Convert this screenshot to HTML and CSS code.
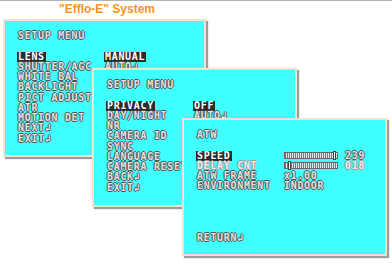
FILE: index.html
```html
<!DOCTYPE html>
<html lang="en">
<head>
    <meta charset="UTF-8">
    <title>Efflo-E System</title>
    <link rel="stylesheet" href="styles.css">
</head>
<body>
    <div class="screen">
        <h1 class="title">"Efflo-E" System</h1>

        <!-- Menu 1 -->
        <div class="osd win-1">
            <div class="head">SETUP MENU</div>
            <div class="menu">
                <span class="sel">LENS</span><span class="sel">MANUAL</span>
                <span>SHUTTER/AGC</span><span>AUTO↲</span>
                <span>WHITE BAL</span><span></span>
                <span>BACKLIGHT</span><span></span>
                <span>PICT ADJUST</span><span></span>
                <span>ATR</span><span></span>
                <span>MOTION DET</span><span></span>
                <span>NEXT↲</span><span></span>
                <span>EXIT↲</span><span></span>
            </div>
        </div>

        <!-- Menu 2 -->
        <div class="osd win-2">
            <div class="head">SETUP MENU</div>
            <div class="menu">
                <span class="sel">PRIVACY</span><span class="sel">OFF</span>
                <span>DAY/NIGHT</span><span>AUTO↲</span>
                <span>NR</span><span></span>
                <span>CAMERA ID</span><span></span>
                <span>SYNC</span><span></span>
                <span>LANGUAGE</span><span></span>
                <span>CAMERA RESET</span><span></span>
                <span>BACK↲</span><span></span>
                <span>EXIT↲</span><span></span>
            </div>
        </div>

        <!-- ATW -->
        <div class="osd win-3">
            <div class="head">ATW</div>
            <div class="menu">
                <span class="sel">SPEED</span>
                <span class="value"><i class="bar"><b class="knob" style="left: 48px"></b></i>239</span>
                <span class="dim">DELAY CNT</span>
                <span class="value dim"><i class="bar"><b class="knob" style="left: 3px"></b></i>018</span>
                <span>ATW FRAME</span><span>x1.00</span>
                <span>ENVIRONMENT</span><span>INDOOR</span>
            </div>
            <div class="foot">RETURN↲</div>
        </div>
    </div>
</body>
</html>
```

FILE: styles.css
```css
* {
    margin: 0;
    padding: 0;
    box-sizing: border-box;
}

body {
    background: #ffffff;
    width: 392px;
    height: 270px;
    overflow: hidden;
}

.screen {
    position: relative;
    width: 392px;
    height: 270px;
    border-top: 1px solid #b4b4b4;
}

.title {
    font-family: 'Liberation Sans', Arial, sans-serif;
    font-size: 12px;
    font-weight: bold;
    color: #f7941d;
    width: 214px;
    text-align: center;
    line-height: 14px;
    padding-top: 1px;
}

.osd {
    position: absolute;
    background: #3fffff;
    border: 2px solid #ece4cf;
    box-shadow: 2px 2px 1px #9c9c9c;
    padding: 10px 13px 0;
    font-family: 'DejaVu Sans Mono', 'Liberation Mono', monospace;
    font-size: 10px;
    font-weight: bold;
    letter-spacing: 0.68px;
    line-height: 10.25px;
    color: #e2e2e2;
    text-shadow: 1px 0 0 #555, -1px 0 0 #555, 0 1px 0 #555, 0 -1px 0 #555;
    white-space: nowrap;
    overflow: hidden;
}

.win-1 { left: 3px; top: 18px; width: 203px; height: 138px; }
.win-2 { left: 92px; top: 67px; width: 205px; height: 139px; }
.win-3 { left: 182px; top: 117px; width: 205px; height: 138px; }

.head {
    height: 10.25px;
    margin-bottom: 10.25px;
}

.menu {
    display: grid;
    grid-template-columns: 87px auto;
    grid-auto-rows: 10.25px;
}

.menu span {
    justify-self: start;
}

.sel {
    background: #2b2b2b;
    color: #ffffff;
    padding: 0 1px;
    margin-left: -1px;
    text-shadow: none;
}

.dim {
    color: #eeeeee;
    text-shadow: 1px 0 0 #9a9a9a, -1px 0 0 #9a9a9a, 0 1px 0 #9a9a9a, 0 -1px 0 #9a9a9a;
}

.value {
    display: flex;
    align-items: center;
    gap: 7px;
}

.bar {
    position: relative;
    display: block;
    width: 54px;
    height: 7px;
    border: 1px solid #666;
    background: repeating-linear-gradient(90deg, #777 0 1px, #e6e6e6 1px 2px);
}

.knob {
    position: absolute;
    top: -2px;
    width: 3px;
    height: 9px;
    background: #ffffff;
    border: 1px solid #444;
}

.foot {
    margin-top: 41px;
}
```
